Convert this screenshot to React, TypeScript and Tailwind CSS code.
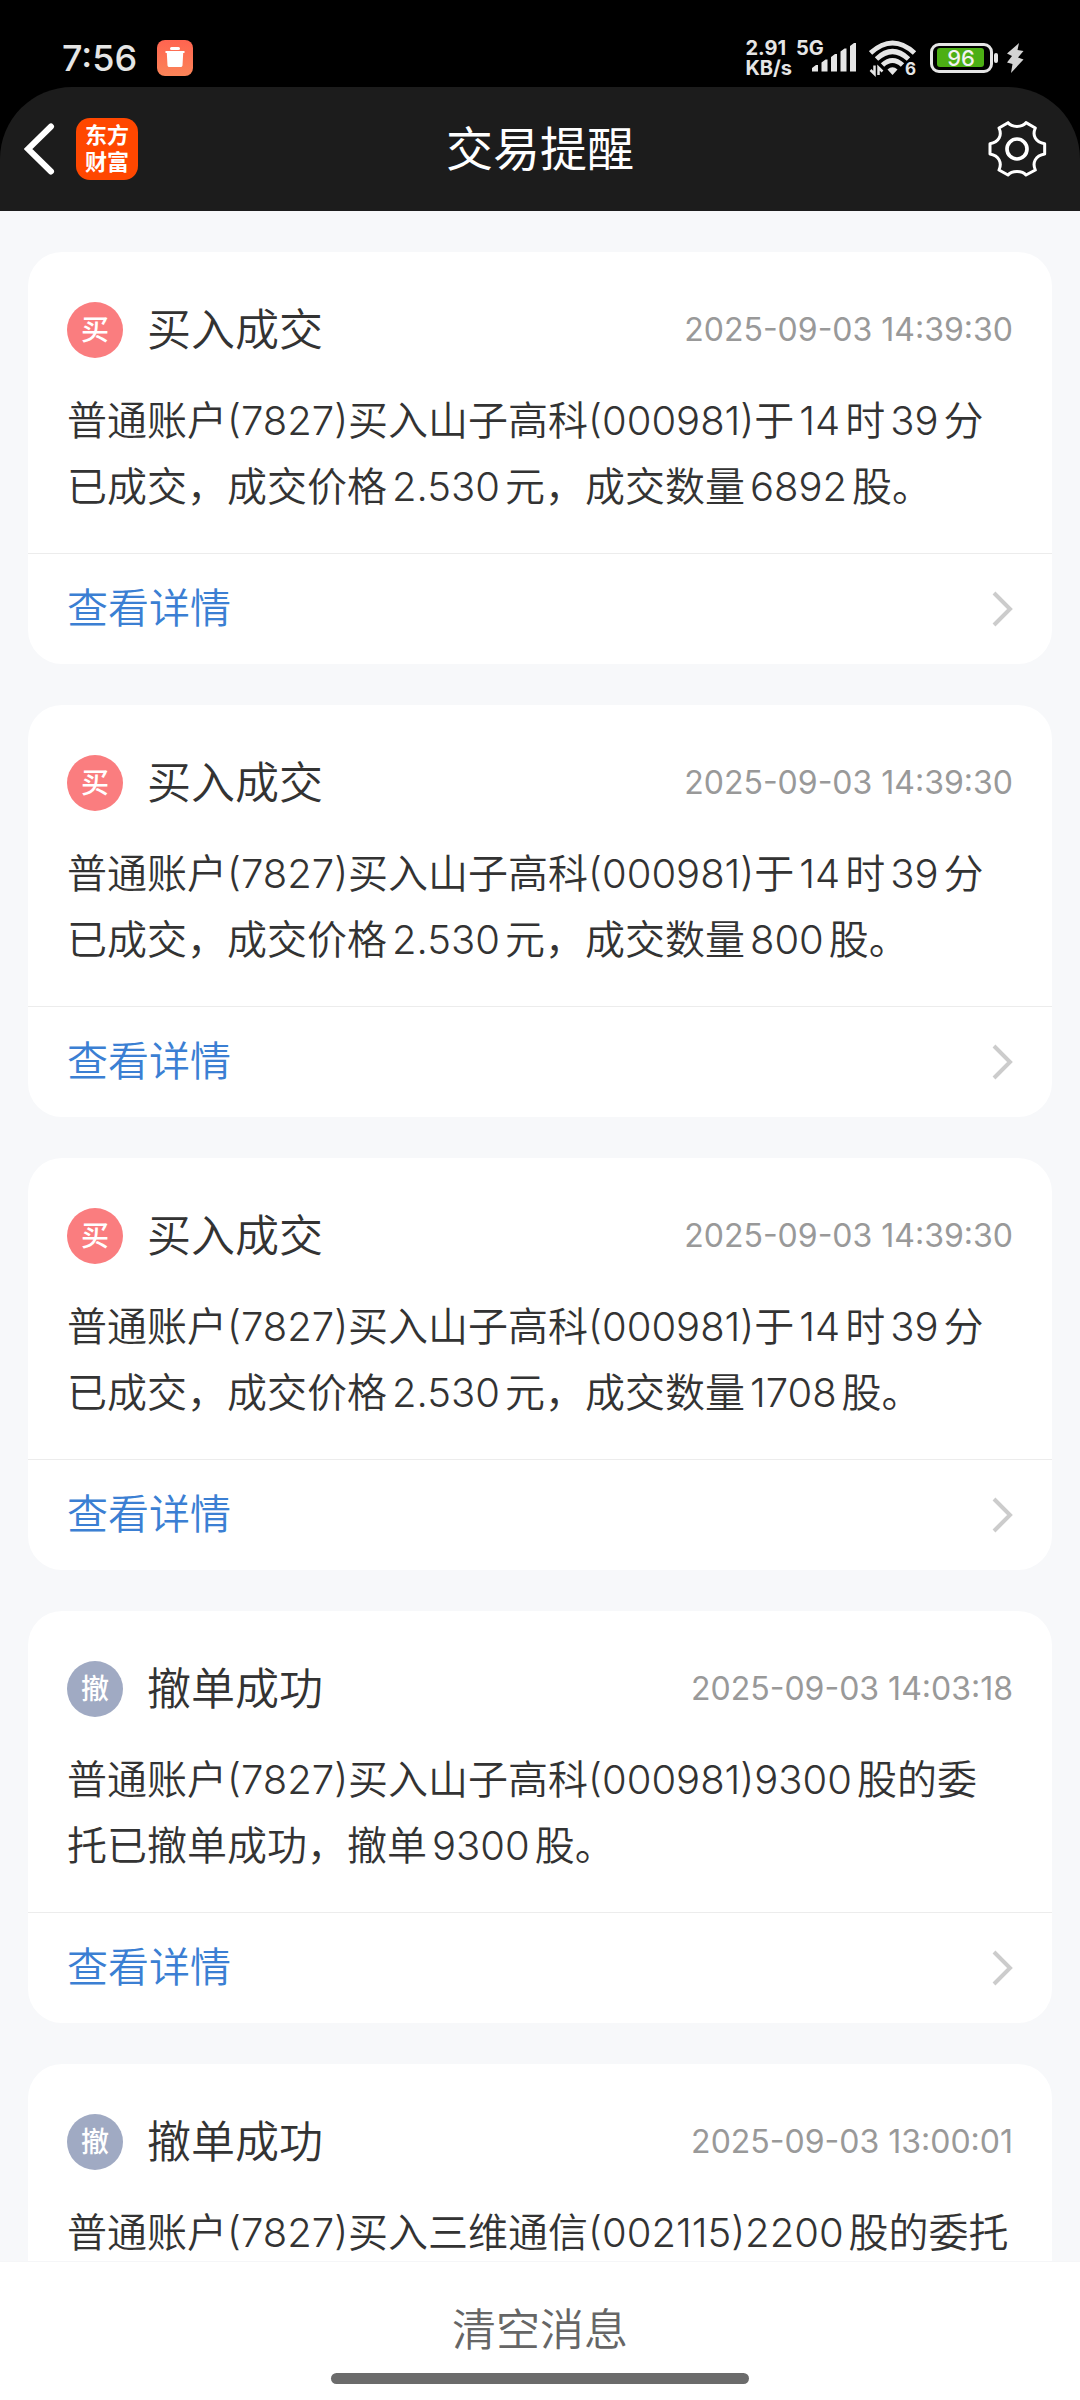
import React from "react";

type NoticeKind = "buy" | "cancel";

interface Notice {
  id: number;
  kind: NoticeKind;
  title: string;
  time: string;
  content: string;
}

const notices: Notice[] = [
  {
    id: 1,
    kind: "buy",
    title: "买入成交",
    time: "2025-09-03 14:39:30",
    content:
      "普通账户(7827)买入山子高科(000981)于14时39分已成交，成交价格2.530元，成交数量6892股。",
  },
  {
    id: 2,
    kind: "buy",
    title: "买入成交",
    time: "2025-09-03 14:39:30",
    content:
      "普通账户(7827)买入山子高科(000981)于14时39分已成交，成交价格2.530元，成交数量800股。",
  },
  {
    id: 3,
    kind: "buy",
    title: "买入成交",
    time: "2025-09-03 14:39:30",
    content:
      "普通账户(7827)买入山子高科(000981)于14时39分已成交，成交价格2.530元，成交数量1708股。",
  },
  {
    id: 4,
    kind: "cancel",
    title: "撤单成功",
    time: "2025-09-03 14:03:18",
    content: "普通账户(7827)买入山子高科(000981)9300股的委托已撤单成功，撤单9300股。",
  },
  {
    id: 5,
    kind: "cancel",
    title: "撤单成功",
    time: "2025-09-03 13:00:01",
    content: "普通账户(7827)买入三维通信(002115)2200股的委托",
  },
];

const badges = {
  buy: { label: "买", className: "bg-[#fa7d7f]" },
  cancel: { label: "撤", className: "bg-[#a0aac3]" },
};

const TrashBadge = () => (
  <svg width="36" height="36" viewBox="0 0 36 36" aria-hidden="true">
    <defs>
      <linearGradient id="trash" x1="0" y1="0" x2="0" y2="1">
        <stop offset="0" stopColor="#ff6450" />
        <stop offset="1" stopColor="#fb8458" />
      </linearGradient>
    </defs>
    <rect width="36" height="36" rx="8" fill="url(#trash)" />
    <rect x="13" y="7" width="10" height="3" rx="1.5" fill="#fff" />
    <path d="M8.5 11h19v2h-1.3l-.7 12.5a1.8 1.8 0 0 1-1.8 1.5H12.3a1.8 1.8 0 0 1-1.8-1.5L9.8 13H8.5z" fill="#fff" />
  </svg>
);

const Signal = () => (
  <svg width="61" height="44" viewBox="0 -4 61 44" fill="#e5e5e5" aria-hidden="true">
    <text x="0" y="15" fontSize="20" fontWeight="700">
      5G
    </text>
    <path d="M16 28l4-3h2v6.500h-6zM25.500 22.500l4-3h2v12h-6zM35 17l4-3h2v17.500h-6zM44.500 11.500l4-3h2v23h-6zM54 6l4-3h2v28.500h-6z" />
  </svg>
);

const Wifi = () => (
  <svg width="48" height="44" viewBox="0 -4 48 44" aria-hidden="true">
    <g fill="none" stroke="#e5e5e5" strokeWidth="5">
      <path d="M1.500 13Q23.500-7 45.500 13" />
      <path d="M7.500 19Q23.500 4 39.500 19" />
      <path d="M13.500 25Q23.500 16 33.500 25" />
    </g>
    <path d="M18.500 29.500q5-4.500 10 0L23.500 35z" fill="#e5e5e5" />
    <path d="M1.500 30l4 4V25.500M13.500 31.500l-4-4V35" fill="none" stroke="#e5e5e5" strokeWidth="2.5" />
    <text x="36" y="35" fontSize="17" fontWeight="700" fill="#e5e5e5">
      6
    </text>
  </svg>
);

const Battery = () => (
  <svg width="69" height="30" viewBox="0 0 69 30" aria-hidden="true">
    <rect x="2.5" y="1.5" width="60" height="27" rx="7.5" fill="none" stroke="#e5e5e5" strokeWidth="3" />
    <rect x="8" y="5" width="47" height="19" rx="3" fill="#4caf14" />
    <rect x="65" y="10" width="4" height="10" rx="2" fill="#e5e5e5" />
    <text x="32" y="23" textAnchor="middle" fontSize="22" fontWeight="500" fill="#f2f2f2">
      96
    </text>
  </svg>
);

const Bolt = () => (
  <svg width="18" height="32" viewBox="0 0 18 32" aria-hidden="true">
    <path d="M13 1L1 11.500l5 2.500-5 6.500 5.500 1.500L5 31 17.500 17.500l-5.500-2L17.500 9l-6-1z" fill="#d4d4d4" />
  </svg>
);

const Gear = () => (
  <svg
    width="62"
    height="60"
    viewBox="799 353 186 180"
    fill="none"
    stroke="#fff"
    strokeWidth="9"
    strokeLinejoin="round"
    aria-hidden="true"
  >
    <path d="M865 364C876 379 908 379 919 364L947 380C937 402 947 422 975 427V458C947 463 937 484 947 506L919 521C908 507 876 507 865 521L838 506C848 484 838 463 811 458V427C838 422 848 402 838 380Z" />
    <circle cx="892" cy="443" r="30" strokeWidth="11" />
  </svg>
);

const StatusBar = () => (
  <div className="flex h-[87px] items-center justify-between pt-7 pr-14 pl-[62px] text-[#e5e5e5]">
    <div className="flex items-center gap-5">
      <span className="text-[36px] leading-none font-medium">7:56</span>
      <TrashBadge />
    </div>
    <div className="flex items-center">
      <div className="mr-1 flex flex-col text-[20px] leading-5 font-bold">
        <span>2.91</span>
        <span>KB/s</span>
      </div>
      <Signal />
      <span className="ml-3">
        <Wifi />
      </span>
      <span className="mr-2 ml-3">
        <Battery />
      </span>
      <Bolt />
    </div>
  </div>
);

const Header = () => (
  <header className="grid h-[124px] grid-cols-3 items-center rounded-t-[72px] bg-[#1c1c1c] px-6 text-white">
    <div className="flex items-center gap-5">
      <button type="button" aria-label="返回">
        <svg width="32" height="52" viewBox="0 0 32 52" fill="none" stroke="#fff" strokeWidth="6" strokeLinecap="round" aria-hidden="true">
          <path d="M27 3.500L4 26l23 22.500" />
        </svg>
      </button>
      <div className="flex size-[62px] flex-col items-center justify-center rounded-[14px] bg-[#ff4700] text-[22px] leading-[27px] font-bold">
        <span>东方</span>
        <span>财富</span>
      </div>
    </div>
    <h1 className="text-center text-[47px] leading-[60px]">交易提醒</h1>
    <button type="button" aria-label="设置" className="mr-2 justify-self-end">
      <Gear />
    </button>
  </header>
);

const NoticeCard = ({ notice }: { notice: Notice }) => {
  const badge = badges[notice.kind];

  return (
    <article className="shrink-0 rounded-[34px] bg-white">
      <div className="px-[39px] pt-[46px] pb-[33px]">
        <div className="flex h-16 items-center">
          <span
            className={`flex size-14 items-center justify-center rounded-full text-[28px] leading-none font-medium text-white ${badge.className}`}
          >
            {badge.label}
          </span>
          <h2 className="ml-6 text-[44px] leading-[64px] font-[350]">{notice.title}</h2>
          <time className="ml-auto text-[32px] text-[#999]">{notice.time}</time>
        </div>
        <p className="mt-[26px] text-[40px] leading-[66px] font-[350] [text-autospace:normal]">
          {notice.content}
        </p>
      </div>
      <a
        href="#"
        className="flex h-[111px] items-center justify-between border-t border-[#ececec] px-[39px] text-[41px] font-[350] text-[#3b7fd3]"
      >
        查看详情
        <svg width="22" height="36" viewBox="0 0 22 36" fill="none" stroke="#ccc" strokeWidth="4" aria-hidden="true">
          <path d="M3 2l16 16L3 34" />
        </svg>
      </a>
    </article>
  );
};

const App = () => {
  return (
    <div
      lang="zh-CN"
      className="flex h-screen flex-col bg-black font-['Inter','Noto_Sans_CJK_SC',sans-serif] text-[#333]"
    >
      <StatusBar />
      <Header />
      <main className="flex min-h-0 flex-1 flex-col gap-[41px] overflow-y-auto bg-[#f7f8fa] px-7 pt-[41px] [scrollbar-width:none]">
        {notices.map((notice) => (
          <NoticeCard key={notice.id} notice={notice} />
        ))}
      </main>
      <footer className="flex flex-col items-center border-t border-[#f5f6f8] bg-white pt-[36px] pb-4">
        <button type="button" className="text-[44px] leading-[64px] font-[350] text-[#666]">
          清空消息
        </button>
        <div className="mt-[11px] h-[11px] w-[418px] rounded-full bg-[#6b6b6b]" />
      </footer>
    </div>
  );
};

export default App;
